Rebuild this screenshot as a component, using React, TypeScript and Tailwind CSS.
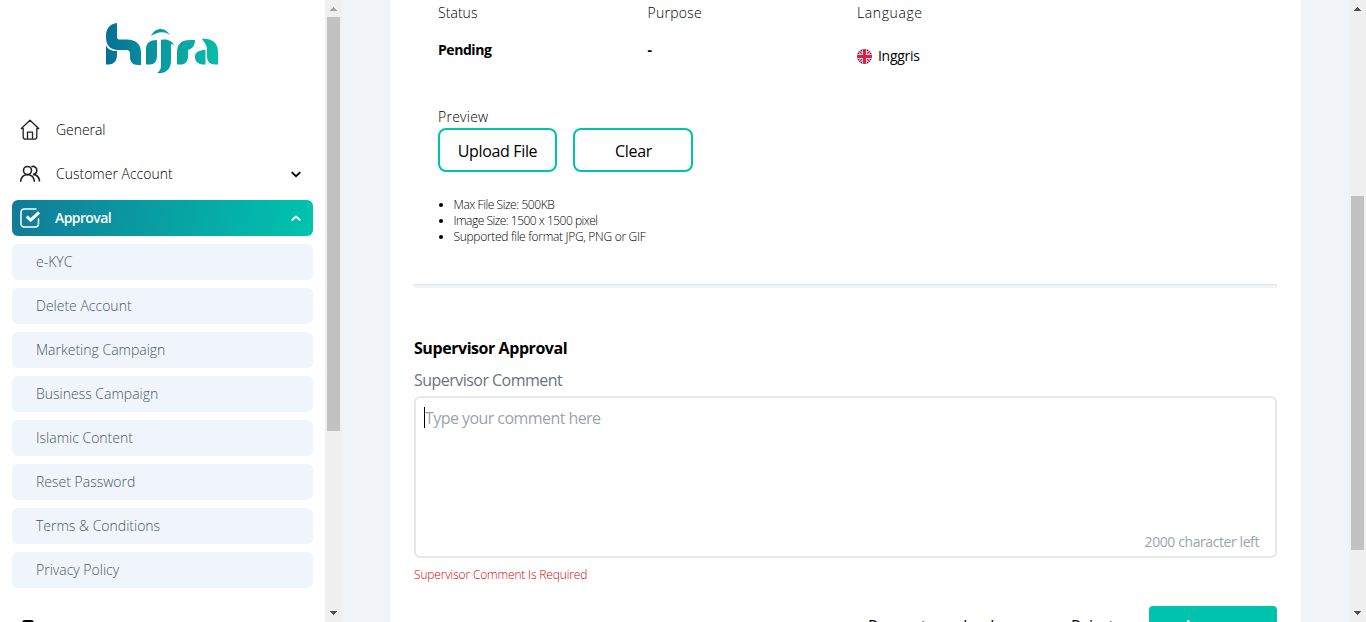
import type { ReactNode } from "react";

const subItems = [
  "e-KYC",
  "Delete Account",
  "Marketing Campaign",
  "Business Campaign",
  "Islamic Content",
  "Reset Password",
  "Terms & Conditions",
  "Privacy Policy",
];

function Logo() {
  return (
    <svg width="114" height="52" viewBox="0 0 114 52" aria-label="hijra">
      <defs>
        <linearGradient id="brand" x1="0" y1="0" x2="113" y2="0" gradientUnits="userSpaceOnUse">
          <stop offset="0" stopColor="#056f95" />
          <stop offset="0.45" stopColor="#0997a0" />
          <stop offset="1" stopColor="#07bea8" />
        </linearGradient>
      </defs>
      <g fill="url(#brand)">
        <path d="M0 13C0 5 4 1 11 0v14c0 2 1 2.5 3 2.500h7c9 0 14 5 14 13V42h-3c-5 0-8-3-8-8v-3c0-3-1-4-4-4H12C4 27 0 22 0 14z" />
        <path d="M0 22c1.500 4 5 6 11 6v4c0 6-3 9-8 9.500H0z" />
        <path d="M51 17v16c0 6-3 8.500-8 8.500h-3V26c0-6 4-9 11-9z" />
        <path d="M45 13c2-4 5-7 9.500-7S62 9 64 12c-3-2-5-2.700-8-2.700-4 0-7 1.200-11 3.700z" />
        <path d="M55 17c6-1.500 11 1 13 5l-3-1v17c0 8-5 13-14 12 3-2 4-4 4-8z" />
        <path d="M71 41.500V30c0-9 4-13 13-13h5c0 6-3 9-7 10v6c0 6-3 8.500-8 8.500z" />
        <path d="M96 16c10-1 16 4 16 13v12.500h-3c-5 0-8-3-8-8V26c0-3-2-6-5-10z" />
        <path d="M99.500 27v14.500C93 42 89 39 89 34s4-7 10.500-7z" />
      </g>
    </svg>
  );
}

function HomeIcon() {
  return (
    <svg width="20" height="22" viewBox="0 0 20 22" fill="none" stroke="#222" strokeWidth="1.3" strokeLinejoin="round" strokeLinecap="round">
      <path d="M1.300 9.500 10 1.200l8.700 8.300M1.300 9.500h1.900v8.200q0 2.500 2.500 2.500h8.600q2.500 0 2.500-2.500V9.500h1.900M7.500 20v-6.800h5V20" />
    </svg>
  );
}

function UsersIcon() {
  return (
    <svg width="22" height="18" viewBox="0 0 22 18" fill="none" stroke="#222" strokeWidth="1.6" strokeLinecap="round">
      <circle cx="8.500" cy="5.500" r="4" />
      <path d="M1.700 16.200c.4-4 2.900-6.500 6.800-6.500s6.400 2.500 6.800 6.500M13 1.500c3-.5 4.800 1.300 4.800 3.700 0 2.300-1.500 3.900-3.800 4.200 3.700.3 6 2.800 6.500 6.500" />
    </svg>
  );
}

function CheckIcon() {
  return (
    <svg width="22" height="20" viewBox="0 0 22 20" fill="none" stroke="white" strokeLinecap="round">
      <path d="M17 1H5.500Q2 1 2 4.500v11Q2 19 5.500 19H16q3.500 0 3.500-3.500V11" strokeWidth="1.500" />
      <path d="m7.700 8.500 3.900 3.600 8.500-7.800" strokeWidth="3" strokeLinecap="butt" />
    </svg>
  );
}

function Chevron({ up = false }: { up?: boolean }) {
  return (
    <svg width="10" height="7" viewBox="0 0 10 7" fill="none" stroke="currentColor" strokeWidth="1.800">
      <path d={up ? "m.7 5.500 4.300-4 4.300 4" : "m.7 1.200 4.300 4 4.300-4"} />
    </svg>
  );
}

function Arrow({ down = false, light = false }: { down?: boolean; light?: boolean }) {
  return (
    <svg width="7" height="4" viewBox="0 0 7 4" shapeRendering="crispEdges" fill={light ? "#a3a3a3" : "#505050"}>
      <path d={down ? "M0 0h7v1H6v1H5v1H4v1H3V3H2V2H1V1H0z" : "M0 4h7V3H6V2H5V1H4V0H3v1H2v1H1v1H0z"} />
    </svg>
  );
}

function Flag() {
  return (
    <svg width="15" height="15" viewBox="0 0 30 30">
      <clipPath id="round"><circle cx="15" cy="15" r="15" /></clipPath>
      <g clipPath="url(#round)">
        <path fill="#1f2b6c" d="M0 0h30v30H0z" />
        <path d="m3 3 24 24M27 3 3 27" stroke="#fff" strokeWidth="6" />
        <path d="m3 3 24 24M27 3 3 27" stroke="#e8193c" strokeWidth="3" />
        <path d="M15 0v30M0 15h30" stroke="#fff" strokeWidth="9" />
        <path d="M15 0v30M0 15h30" stroke="#e8193c" strokeWidth="6" />
      </g>
    </svg>
  );
}

function NavRow({ icon, children }: { icon: ReactNode; children: ReactNode }) {
  return (
    <div className="flex h-9 items-center pr-3 pl-[7px]">
      <span className="flex w-[22px] justify-center">{icon}</span>
      {children}
    </div>
  );
}

export default function App() {
  return (
    <div className="flex h-[622px] w-full overflow-hidden bg-[#f0f4f9] font-['Open_Sans',sans-serif] text-black">
      <aside className="flex w-[325px] shrink-0 flex-col bg-white px-3 pt-[23px]">
        <div className="flex h-[52px] pl-[94px]"><Logo /></div>
        <nav className="mt-[37px] flex flex-col gap-2 text-sm font-light">
          <NavRow icon={<HomeIcon />}>
            <span className="ml-[15px] tracking-[-0.05px]">General</span>
          </NavRow>
          <NavRow icon={<UsersIcon />}>
            <span className="ml-[15px] flex-1">Customer Account</span>
            <Chevron />
          </NavRow>
          <div className="w-[301px] rounded-md bg-linear-[100deg] from-[#117b98] to-[#00c4ae] text-white">
            <NavRow icon={<CheckIcon />}>
              <span className="ml-[14px] flex-1 font-semibold tracking-[-0.6px]">Approval</span>
              <Chevron up />
            </NavRow>
          </div>
          {subItems.map((item) => (
            <div key={item} className="flex h-9 w-[301px] items-center rounded-md bg-[#eff5fa] pl-6 text-[#4b5563]">
              {item}
            </div>
          ))}
        </nav>
        <div className="mt-8 ml-[10px] h-5 w-3 shrink-0 rounded-[3px] bg-black" />
      </aside>

      <div className="flex w-[17px] shrink-0 flex-col items-center bg-[#f0f0f0] pt-[7px] pb-[7px]">
        <Arrow light />
        <div className="mt-[6px] h-[414px] w-[13px] bg-[#c1c1c1]" />
        <div className="flex-1" />
        <Arrow down />
      </div>

      <main className="ml-12 h-[622px] w-[911px] shrink-0 overflow-hidden bg-white px-6">
        <section className="h-[284px] pl-6">
          <div className="grid grid-cols-[209.5px_209.5px_1fr] pt-[3px] text-sm font-light">
            <div className="leading-5 tracking-[0.05px]">Status</div>
            <div className="leading-5 tracking-[0.25px]">Purpose</div>
            <div className="leading-5 tracking-[0.6px]">Language</div>
            <div className="mt-[17px] leading-5 font-bold tracking-[-0.45px]">Pending</div>
            <div className="mt-[17px] leading-5 font-bold">-</div>
            <div className="mt-[23px] flex h-5 items-center gap-[6px] font-normal tracking-[-0.3px]"><Flag />Inggris</div>
          </div>
          <div className="mt-[41px] text-sm leading-5 font-light tracking-[0.25px]">Preview</div>
          <div className="mt-[1px] flex gap-4">
            <button className="h-11 w-[119px] rounded-lg border-2 border-[#00c3ad] pt-px text-base tracking-[-0.35px]">Upload File</button>
            <button className="h-11 w-[120px] rounded-lg border-2 border-[#00c3ad] pt-px pl-px text-base tracking-[-0.3px]">Clear</button>
          </div>
          <ul className="mt-[25px] list-disc pl-[15.5px] text-xs leading-4 font-light">
            <li className="tracking-[-0.43px]">Max File Size: 500KB</li>
            <li className="tracking-[-0.5px]">Image Size: 1500 x 1500 pixel</li>
            <li className="tracking-[-0.3px]">Supported file format JPG, PNG or GIF</li>
          </ul>
        </section>
        <div className="h-1 border-t border-[#dfe2e8] bg-[#f0f4f9]" />
        <section className="pt-[48px]">
          <h2 className="text-base leading-6 font-bold tracking-[-0.44px]">Supervisor Approval</h2>
          <div className="mt-2 text-base leading-6 tracking-[-0.53px] text-[#6b7280]">Supervisor Comment</div>
          <div className="mt-1 flex h-[162px] flex-col justify-between rounded-md border-2 border-[#e5e7eb] pt-2 pr-4 pb-1 pl-2 text-[#9ca3af]">
            <div className="flex text-base leading-6 tracking-[-0.56px]">
              <span className="mt-px h-[21px] w-px bg-black" />
              Type your comment here
            </div>
            <div className="self-end text-sm leading-5 tracking-[-0.41px]">2000 character left</div>
          </div>
          <div className="mt-[9px] text-xs leading-4 font-light tracking-[-0.16px] text-[#e00000]">Supervisor Comment Is Required</div>
          <div className="mt-[23px] flex h-11 items-start justify-end text-base leading-[38px] tracking-[-0.4px]">
            <button className="mt-px w-[161px] text-left">Request reupload</button>
            <button className="mt-px ml-[42px] w-[78px] text-left">Reject</button>
            <button className="h-11 w-32 rounded bg-[#00c3ad] pb-1 text-white">Approve</button>
          </div>
        </section>
      </main>

      <div className="ml-auto flex w-[17px] shrink-0 flex-col items-center bg-[#f0f0f0] pt-[7px] pb-[7px]">
        <Arrow />
        <div className="mt-[185px] h-[354px] w-[13px] bg-[#c1c1c1]" />
        <div className="flex-1" />
        <Arrow down />
      </div>
    </div>
  );
}
